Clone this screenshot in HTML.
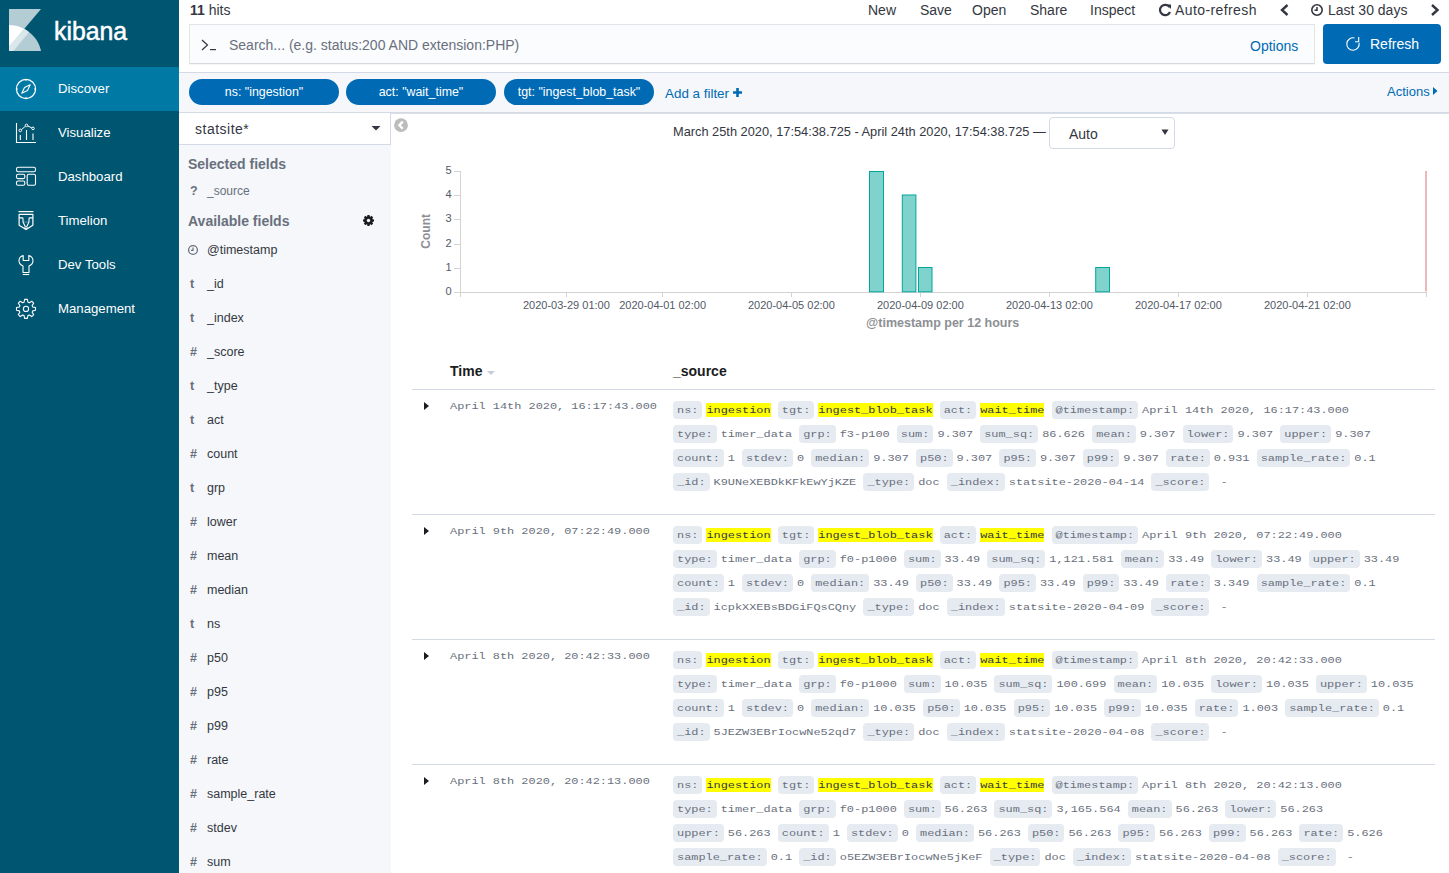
<!DOCTYPE html><html><head><meta charset="utf-8"><style>
*{box-sizing:border-box;margin:0;padding:0}
html,body{width:1449px;height:873px;overflow:hidden;background:#fff}
body{position:relative;font-family:"Liberation Sans",sans-serif;color:#343741}
.a{position:absolute;white-space:pre;line-height:1}
#nav{position:absolute;left:0;top:0;width:179px;height:873px;background:#005571}
.ni{position:absolute;left:0;width:179px;height:44px}
.ni.act{background:#0079a5}
.ni span{position:absolute;left:58px;top:15px;font-size:13.2px;color:#fff;line-height:1}
.ni svg{position:absolute;left:0;top:0}
.tn{position:absolute;top:3px;font-size:14px;line-height:1;white-space:pre;color:#343741}
.pill{position:absolute;top:79px;height:26px;width:150px;border-radius:13px;background:#006bb4;color:#fff;font-size:12.4px;text-align:center;line-height:26px;white-space:pre}
.fl{position:absolute;left:188px;height:14px;width:190px;font-size:12.5px;line-height:1;color:#343741;white-space:pre}
.fl b{position:absolute;left:2px;top:0px;font-weight:700;color:#69707d;font-size:12.5px}
.fl i{position:absolute;left:19px;top:0;font-style:normal}
.src{position:absolute;left:673px;font-family:"Liberation Mono",monospace;font-size:11.9px;color:#69707d;line-height:24px;white-space:pre}
.src div{height:24px}
.src dt,.src dd{display:inline}
.src dt{background:#e6ebf2;padding:2px 4px;margin-right:4px;border-radius:4px;color:#69707d}
.src mark{background:#ff0;color:#343741}
.src s,.tm s{text-decoration:none;display:inline-block;transform:translateY(0.6px) scaleY(0.8);transform-origin:0 10px}
.tm{position:absolute;left:450px;font-family:"Liberation Mono",monospace;font-size:11.9px;color:#69707d;line-height:1;white-space:pre}
.sep{position:absolute;left:412px;width:1023px;height:1px;background:#d3dae6}
.exp{position:absolute;left:424px;width:0;height:0;border-top:4px solid transparent;border-bottom:4px solid transparent;border-left:5px solid #1a1c21}
</style></head><body>
<div id="nav">
<svg style="position:absolute;left:0;top:0" width="60" height="60" viewBox="0 0 60 60">
<defs><clipPath id="sq"><rect x="9" y="9" width="32" height="42"/></clipPath>
<clipPath id="arc"><path d="M9,25 C24,25 38,36 41,51 L9,51 Z"/></clipPath></defs>
<g clip-path="url(#sq)">
<polygon points="9,9 41,9 9,47" fill="#b4cdd4"/>
<path d="M9,25 C24,25 38,36 41,51 L9,51 Z" fill="#b4cdd4"/>
<g clip-path="url(#arc)">
<polygon points="0,57.5 41,9 0,9" fill="#fff"/>
<polygon points="0,57.5 41,9 45,13 10,55" fill="#dae7eb"/>
</g>
</g>
</svg>
<div class="a" style="left:54px;top:18px;font-size:26px;color:#fff;-webkit-text-stroke:0.5px #fff;transform:scaleX(0.955);transform-origin:0 0">kibana</div>
<div class="ni act" style="top:67px"><svg width="50" height="44" viewBox="0 0 50 44"><circle cx="26" cy="22" r="9.6" fill="none" stroke="#fff" stroke-width="1.2"/><path d="M26,12.4 V14 M26,30 V31.6 M16.4,22 H18 M34,22 H35.6" stroke="#fff" stroke-width="1"/><path d="M21.8,26.2 L24.5,20.5 L30.2,17.8 L27.5,23.5 Z" fill="none" stroke="#fff" stroke-width="1.1" stroke-linejoin="round"/></svg><span>Discover</span></div>
<div class="ni" style="top:111px"><svg width="50" height="44" viewBox="0 0 50 44"><path d="M16.5,12 V31.5 H36" fill="none" stroke="#fff" stroke-width="1.1"/><circle cx="20.3" cy="19.4" r="1.3" fill="none" stroke="#fff" stroke-width="1"/><circle cx="26.5" cy="14.4" r="1.3" fill="none" stroke="#fff" stroke-width="1"/><circle cx="33" cy="17.4" r="1.3" fill="none" stroke="#fff" stroke-width="1"/><path d="M21.4,18.6 L25.4,15.3 M27.7,15 L31.8,16.8" stroke="#fff" stroke-width="1"/><path d="M20.3,24 V29 M26.5,19 V29 M33,22.5 V29" stroke="#fff" stroke-width="1.1"/></svg><span>Visualize</span></div>
<div class="ni" style="top:155px"><svg width="50" height="44" viewBox="0 0 50 44"><rect x="16.5" y="12.3" width="19" height="4.5" rx="1.8" fill="none" stroke="#fff" stroke-width="1.1"/><rect x="16.5" y="19.3" width="8.3" height="4.3" rx="1.5" fill="none" stroke="#fff" stroke-width="1.1"/><rect x="16.5" y="26" width="8.3" height="4.3" rx="1.5" fill="none" stroke="#fff" stroke-width="1.1"/><rect x="27.2" y="19.3" width="8.3" height="11" rx="1.5" fill="none" stroke="#fff" stroke-width="1.1"/></svg><span>Dashboard</span></div>
<div class="ni" style="top:199px"><svg width="50" height="44" viewBox="0 0 50 44"><path d="M18.5,12.6 H33.5" stroke="#fff" stroke-width="1.2"/><path d="M19.1,15.3 H32.9 V26.2 L26,30.6 L19.1,26.2 Z" fill="none" stroke="#fff" stroke-width="1.2" stroke-linejoin="round"/><path d="M19.1,18.9 H22.2 Q23,18.9 23,19.8 V23 L25.2,27.6 M32.9,18.9 H29.8 Q29,18.9 29,19.8 V23 L26.8,27.6" fill="none" stroke="#fff" stroke-width="1.1"/><path d="M23,23 H29" stroke="#fff" stroke-width="0.6" opacity="0.6"/><circle cx="26" cy="28.6" r="1.1" fill="none" stroke="#fff" stroke-width="1"/></svg><span>Timelion</span></div>
<div class="ni" style="top:243px"><svg width="50" height="44" viewBox="0 0 50 44"><path d="M23.2,12.5 C20.5,13.3 19,15.5 19,17.8 C19,20 20.5,22 23,23 V29.5 H29 V23 C31.5,22 33,20 33,17.8 C33,15.5 31.5,13.3 28.8,12.5 V17.5 H23.2 Z" fill="none" stroke="#fff" stroke-width="1.1" stroke-linejoin="round"/><path d="M22.8,31.5 H29.2" stroke="#fff" stroke-width="1.1"/></svg><span>Dev Tools</span></div>
<div class="ni" style="top:287px"><svg width="50" height="44" viewBox="0 0 50 44"><path d="M32.72,19.95 L35.50,20.55 L35.50,23.25 L32.72,23.85 L32.13,25.27 L33.68,27.66 L31.76,29.58 L29.37,28.03 L27.95,28.62 L27.35,31.40 L24.65,31.40 L24.05,28.62 L22.63,28.03 L20.24,29.58 L18.32,27.66 L19.87,25.27 L19.28,23.85 L16.50,23.25 L16.50,20.55 L19.28,19.95 L19.87,18.53 L18.32,16.14 L20.24,14.22 L22.63,15.77 L24.05,15.18 L24.65,12.40 L27.35,12.40 L27.95,15.18 L29.37,15.77 L31.76,14.22 L33.68,16.14 L32.13,18.53 Z" fill="none" stroke="#fff" stroke-width="1.1" stroke-linejoin="round"/><circle cx="26" cy="21.9" r="2.6" fill="none" stroke="#fff" stroke-width="1.1"/></svg><span>Management</span></div>
</div>
<div class="tn" style="left:190px"><b>11</b> hits</div>
<div class="tn" style="left:868px">New</div>
<div class="tn" style="left:920px">Save</div>
<div class="tn" style="left:972px">Open</div>
<div class="tn" style="left:1030px">Share</div>
<div class="tn" style="left:1090px">Inspect</div>
<div class="tn" style="left:1175px;letter-spacing:0.4px">Auto-refresh</div>
<div class="tn" style="left:1328px">Last 30 days</div>
<svg style="position:absolute;left:1157px;top:2px" width="16" height="16" viewBox="0 0 16 16"><path d="M12.6,5.2 A5.2,5.2 0 1 0 13,10" fill="none" stroke="#343741" stroke-width="2.2"/><path d="M9.5,2.5 L14,2.5 L14,7 Z" fill="#343741"/></svg>
<svg style="position:absolute;left:1278px;top:2px" width="14" height="16" viewBox="0 0 14 16"><path d="M9.5,3 L4,8 L9.5,13" fill="none" stroke="#343741" stroke-width="2.4"/></svg>
<svg style="position:absolute;left:1428px;top:2px" width="14" height="16" viewBox="0 0 14 16"><path d="M4,3 L9.5,8 L4,13" fill="none" stroke="#343741" stroke-width="2.4"/></svg>
<svg style="position:absolute;left:1309px;top:3px" width="16" height="16" viewBox="0 0 16 16"><circle cx="8" cy="7" r="5.2" fill="none" stroke="#343741" stroke-width="1.6"/><path d="M8,4 V7.3 H5.5" fill="none" stroke="#343741" stroke-width="1.5"/></svg>
<div style="position:absolute;left:189px;top:24px;width:1126px;height:40px;background:#fbfcfd;border:1px solid #e2e4e8;border-bottom-color:#d6d8dc;box-shadow:0 1px 1px rgba(0,0,0,0.04)"></div>
<svg style="position:absolute;left:198px;top:36px" width="22" height="18" viewBox="0 0 22 18"><path d="M4,4 L9.5,9 L4,14" fill="none" stroke="#343741" stroke-width="1.2"/><path d="M12,13.6 H18" stroke="#343741" stroke-width="1.2"/></svg>
<div class="a" style="left:229px;top:38px;font-size:14px;color:#69707d">Search... (e.g. status:200 AND extension:PHP)</div>
<div class="a" style="left:1250px;top:39px;font-size:14px;color:#006bb4">Options</div>
<div style="position:absolute;left:1323px;top:24px;width:118px;height:40px;background:#006bb4;border-radius:4px"></div>
<svg style="position:absolute;left:1344px;top:35px" width="18" height="18" viewBox="0 0 18 18"><path d="M10.5,3 A6.2,6.2 0 1 0 15.1,7.9" fill="none" stroke="#fff" stroke-width="1.1"/><path d="M14.7,2 V6.8 H11" fill="none" stroke="#fff" stroke-width="1.1"/></svg>
<div class="a" style="left:1370px;top:37px;font-size:14px;color:#fff">Refresh</div>
<div style="position:absolute;left:179px;top:72px;width:1270px;height:41px;background:#f5f7fa;border-top:1px solid #d3dae6;border-bottom:1px solid #d3dae6;box-shadow:0 1px 0 rgba(211,218,230,0.85)"></div>
<div class="pill" style="left:189px">ns: "ingestion"</div>
<div class="pill" style="left:346px">act: "wait_time"</div>
<div class="pill" style="left:504px">tgt: "ingest_blob_task"</div>
<div class="a" style="left:665px;top:87px;font-size:13.4px;color:#006bb4">Add a filter</div>
<svg style="position:absolute;left:732px;top:87px" width="12" height="12" viewBox="0 0 12 12"><path d="M5.5,1 V10 M1,5.5 H10" stroke="#006bb4" stroke-width="2.6"/></svg>
<div class="a" style="left:1387px;top:85px;font-size:13px;color:#006bb4">Actions</div>
<svg style="position:absolute;left:1431px;top:85px" width="8" height="12" viewBox="0 0 8 12"><path d="M2,2 L6.5,6 L2,10 Z" fill="#006bb4"/></svg>
<div style="position:absolute;left:179px;top:113px;width:212px;height:760px;background:#f5f7fa"></div>
<div style="position:absolute;left:179px;top:113px;width:212px;height:32px;background:#fff;border-right:1px solid #d3dae6;border-bottom:1px solid #d3dae6"></div>
<div class="a" style="left:195px;top:122px;font-size:14px;letter-spacing:0.5px">statsite*</div>
<svg style="position:absolute;left:370px;top:124px" width="12" height="8" viewBox="0 0 12 8"><path d="M1.5,2 L10.5,2 L6,6.5 Z" fill="#343741"/></svg>
<div class="a" style="left:188px;top:157px;font-size:14px;font-weight:700;color:#69707d">Selected fields</div>
<div class="fl" style="top:185px"><b>?</b><i style="color:#69707d;font-size:12px">_source</i></div>
<div class="a" style="left:188px;top:214px;font-size:14px;font-weight:700;color:#69707d">Available fields</div>
<svg style="position:absolute;left:362px;top:214px" width="13" height="13" viewBox="0 0 13 13"><path d="M10.73,5.27 L11.99,5.41 L11.99,7.59 L10.73,7.73 L10.36,8.62 L11.16,9.61 L9.61,11.16 L8.62,10.36 L7.73,10.73 L7.59,11.99 L5.41,11.99 L5.27,10.73 L4.38,10.36 L3.39,11.16 L1.84,9.61 L2.64,8.62 L2.27,7.73 L1.01,7.59 L1.01,5.41 L2.27,5.27 L2.64,4.38 L1.84,3.39 L3.39,1.84 L4.38,2.64 L5.27,2.27 L5.41,1.01 L7.59,1.01 L7.73,2.27 L8.62,2.64 L9.61,1.84 L11.16,3.39 L10.36,4.38 Z" fill="#1a1c21"/><circle cx="6.5" cy="6.5" r="1.7" fill="#f5f7fa"/></svg>
<svg style="position:absolute;left:187px;top:244px" width="12" height="12" viewBox="0 0 12 12"><circle cx="6" cy="6" r="4.4" fill="none" stroke="#69707d" stroke-width="1.3"/><path d="M6,3.5 V6.4 H4" fill="none" stroke="#69707d" stroke-width="1.2"/></svg>
<div class="fl" style="top:244px"><i>@timestamp</i></div>
<div class="fl" style="top:278px"><b>t</b><i>_id</i></div>
<div class="fl" style="top:312px"><b>t</b><i>_index</i></div>
<div class="fl" style="top:346px"><b>#</b><i>_score</i></div>
<div class="fl" style="top:380px"><b>t</b><i>_type</i></div>
<div class="fl" style="top:414px"><b>t</b><i>act</i></div>
<div class="fl" style="top:448px"><b>#</b><i>count</i></div>
<div class="fl" style="top:482px"><b>t</b><i>grp</i></div>
<div class="fl" style="top:516px"><b>#</b><i>lower</i></div>
<div class="fl" style="top:550px"><b>#</b><i>mean</i></div>
<div class="fl" style="top:584px"><b>#</b><i>median</i></div>
<div class="fl" style="top:618px"><b>t</b><i>ns</i></div>
<div class="fl" style="top:652px"><b>#</b><i>p50</i></div>
<div class="fl" style="top:686px"><b>#</b><i>p95</i></div>
<div class="fl" style="top:720px"><b>#</b><i>p99</i></div>
<div class="fl" style="top:754px"><b>#</b><i>rate</i></div>
<div class="fl" style="top:788px"><b>#</b><i>sample_rate</i></div>
<div class="fl" style="top:822px"><b>#</b><i>stdev</i></div>
<div class="fl" style="top:856px"><b>#</b><i>sum</i></div>
<svg style="position:absolute;left:393px;top:117px" width="16" height="16" viewBox="0 0 16 16"><circle cx="8" cy="8.2" r="6.9" fill="#bcbcbc"/><path d="M9.8,4.6 L6.3,8.2 L9.8,11.8" fill="none" stroke="#fff" stroke-width="2.3"/></svg>
<div class="a" style="left:673px;top:126px;font-size:12.8px">March 25th 2020, 17:54:38.725 - April 24th 2020, 17:54:38.725 —</div>
<div style="position:absolute;left:1049px;top:117px;width:126px;height:32px;background:#fff;border:1px solid #d3dae6;border-radius:4px"></div>
<div class="a" style="left:1069px;top:127px;font-size:14px">Auto</div>
<svg style="position:absolute;left:1160px;top:127px" width="10" height="10" viewBox="0 0 10 10"><path d="M1.5,2.5 L8.5,2.5 L5,8 Z" fill="#343741"/></svg>
<svg style="position:absolute;left:0;top:0" width="1449" height="873" viewBox="0 0 1449 873"><g stroke="#d3d3d3" stroke-width="1" shape-rendering="crispEdges"><line x1="460.5" y1="171" x2="460.5" y2="297"/><line x1="460" y1="292.5" x2="1426" y2="292.5"/><line x1="454" y1="292.5" x2="460" y2="292.5"/><line x1="454" y1="268.3" x2="460" y2="268.3"/><line x1="454" y1="244.1" x2="460" y2="244.1"/><line x1="454" y1="219.9" x2="460" y2="219.9"/><line x1="454" y1="195.7" x2="460" y2="195.7"/><line x1="454" y1="171.5" x2="460" y2="171.5"/><line x1="566.4" y1="292" x2="566.4" y2="297"/><line x1="662.6" y1="292" x2="662.6" y2="297"/><line x1="791.4" y1="292" x2="791.4" y2="297"/><line x1="920.4" y1="292" x2="920.4" y2="297"/><line x1="1049.4" y1="292" x2="1049.4" y2="297"/><line x1="1178.4" y1="292" x2="1178.4" y2="297"/><line x1="1307.4" y1="292" x2="1307.4" y2="297"/><line x1="1426.4" y1="292" x2="1426.4" y2="297"/></g><rect x="869.5" y="171.5" width="14" height="120.30000000000001" fill="#80d2cc" stroke="#00a69b" stroke-width="1"/><rect x="902.3" y="195.0" width="13.600000000000023" height="96.80000000000001" fill="#80d2cc" stroke="#00a69b" stroke-width="1"/><rect x="918.5" y="267.5" width="13.5" height="24.30000000000001" fill="#80d2cc" stroke="#00a69b" stroke-width="1"/><rect x="1095.7" y="267.5" width="13.799999999999955" height="24.30000000000001" fill="#80d2cc" stroke="#00a69b" stroke-width="1"/><line x1="1426" y1="171" x2="1426" y2="291.5" stroke="#e7a0a3" stroke-width="1.5"/><g font-family="Liberation Sans" font-size="11" fill="#535966"><text x="451.5" y="295.0" text-anchor="end">0</text><text x="451.5" y="270.8" text-anchor="end">1</text><text x="451.5" y="246.6" text-anchor="end">2</text><text x="451.5" y="222.4" text-anchor="end">3</text><text x="451.5" y="198.2" text-anchor="end">4</text><text x="451.5" y="174.0" text-anchor="end">5</text><text x="566.4" y="309" text-anchor="middle">2020-03-29 01:00</text><text x="662.6" y="309" text-anchor="middle">2020-04-01 02:00</text><text x="791.4" y="309" text-anchor="middle">2020-04-05 02:00</text><text x="920.4" y="309" text-anchor="middle">2020-04-09 02:00</text><text x="1049.4" y="309" text-anchor="middle">2020-04-13 02:00</text><text x="1178.4" y="309" text-anchor="middle">2020-04-17 02:00</text><text x="1307.4" y="309" text-anchor="middle">2020-04-21 02:00</text></g><text x="942.7" y="327" text-anchor="middle" font-family="Liberation Sans" font-size="12.5" font-weight="700" fill="#8d8f94">@timestamp per 12 hours</text><text transform="translate(430,231.3) rotate(-90)" text-anchor="middle" font-family="Liberation Sans" font-size="12" font-weight="700" fill="#8d8f94">Count</text></svg>
<div class="a" style="left:450px;top:364px;font-size:14px;font-weight:700;color:#1a1c21">Time</div>
<svg style="position:absolute;left:486px;top:369px" width="10" height="8" viewBox="0 0 10 8"><path d="M1,2 L9,2 L5,6 Z" fill="#c5ccd7"/></svg>
<div class="a" style="left:673px;top:364px;font-size:14px;font-weight:700;color:#1a1c21">_source</div>
<div class="sep" style="top:389px;height:1px"></div>
<div class="exp" style="top:402px"></div>
<div class="tm" style="top:400px"><s>April 14th 2020, 16:17:43.000</s></div>
<div class="src" style="top:398px"><div><dt><s>ns:</s></dt><dd><mark><s>ingestion</s></mark></dd> <dt><s>tgt:</s></dt><dd><mark><s>ingest_blob_task</s></mark></dd> <dt><s>act:</s></dt><dd><mark><s>wait_time</s></mark></dd> <dt><s>@timestamp:</s></dt><dd><s>April 14th 2020, 16:17:43.000</s></dd></div><div><dt><s>type:</s></dt><dd><s>timer_data</s></dd> <dt><s>grp:</s></dt><dd><s>f3-p100</s></dd> <dt><s>sum:</s></dt><dd><s>9.307</s></dd> <dt><s>sum_sq:</s></dt><dd><s>86.626</s></dd> <dt><s>mean:</s></dt><dd><s>9.307</s></dd> <dt><s>lower:</s></dt><dd><s>9.307</s></dd> <dt><s>upper:</s></dt><dd><s>9.307</s></dd></div><div><dt><s>count:</s></dt><dd><s>1</s></dd> <dt><s>stdev:</s></dt><dd><s>0</s></dd> <dt><s>median:</s></dt><dd><s>9.307</s></dd> <dt><s>p50:</s></dt><dd><s>9.307</s></dd> <dt><s>p95:</s></dt><dd><s>9.307</s></dd> <dt><s>p99:</s></dt><dd><s>9.307</s></dd> <dt><s>rate:</s></dt><dd><s>0.931</s></dd> <dt><s>sample_rate:</s></dt><dd><s>0.1</s></dd></div><div><dt><s>_id:</s></dt><dd><s>K9UNeXEBDkKFkEwYjKZE</s></dd> <dt><s>_type:</s></dt><dd><s>doc</s></dd> <dt><s>_index:</s></dt><dd><s>statsite-2020-04-14</s></dd> <dt><s>_score:</s></dt><dd><s> -</s></dd></div></div>
<div class="sep" style="top:514px"></div>
<div class="exp" style="top:527px"></div>
<div class="tm" style="top:525px"><s>April 9th 2020, 07:22:49.000</s></div>
<div class="src" style="top:523px"><div><dt><s>ns:</s></dt><dd><mark><s>ingestion</s></mark></dd> <dt><s>tgt:</s></dt><dd><mark><s>ingest_blob_task</s></mark></dd> <dt><s>act:</s></dt><dd><mark><s>wait_time</s></mark></dd> <dt><s>@timestamp:</s></dt><dd><s>April 9th 2020, 07:22:49.000</s></dd></div><div><dt><s>type:</s></dt><dd><s>timer_data</s></dd> <dt><s>grp:</s></dt><dd><s>f0-p1000</s></dd> <dt><s>sum:</s></dt><dd><s>33.49</s></dd> <dt><s>sum_sq:</s></dt><dd><s>1,121.581</s></dd> <dt><s>mean:</s></dt><dd><s>33.49</s></dd> <dt><s>lower:</s></dt><dd><s>33.49</s></dd> <dt><s>upper:</s></dt><dd><s>33.49</s></dd></div><div><dt><s>count:</s></dt><dd><s>1</s></dd> <dt><s>stdev:</s></dt><dd><s>0</s></dd> <dt><s>median:</s></dt><dd><s>33.49</s></dd> <dt><s>p50:</s></dt><dd><s>33.49</s></dd> <dt><s>p95:</s></dt><dd><s>33.49</s></dd> <dt><s>p99:</s></dt><dd><s>33.49</s></dd> <dt><s>rate:</s></dt><dd><s>3.349</s></dd> <dt><s>sample_rate:</s></dt><dd><s>0.1</s></dd></div><div><dt><s>_id:</s></dt><dd><s>icpkXXEBsBDGiFQsCQny</s></dd> <dt><s>_type:</s></dt><dd><s>doc</s></dd> <dt><s>_index:</s></dt><dd><s>statsite-2020-04-09</s></dd> <dt><s>_score:</s></dt><dd><s> -</s></dd></div></div>
<div class="sep" style="top:639px"></div>
<div class="exp" style="top:652px"></div>
<div class="tm" style="top:650px"><s>April 8th 2020, 20:42:33.000</s></div>
<div class="src" style="top:648px"><div><dt><s>ns:</s></dt><dd><mark><s>ingestion</s></mark></dd> <dt><s>tgt:</s></dt><dd><mark><s>ingest_blob_task</s></mark></dd> <dt><s>act:</s></dt><dd><mark><s>wait_time</s></mark></dd> <dt><s>@timestamp:</s></dt><dd><s>April 8th 2020, 20:42:33.000</s></dd></div><div><dt><s>type:</s></dt><dd><s>timer_data</s></dd> <dt><s>grp:</s></dt><dd><s>f0-p1000</s></dd> <dt><s>sum:</s></dt><dd><s>10.035</s></dd> <dt><s>sum_sq:</s></dt><dd><s>100.699</s></dd> <dt><s>mean:</s></dt><dd><s>10.035</s></dd> <dt><s>lower:</s></dt><dd><s>10.035</s></dd> <dt><s>upper:</s></dt><dd><s>10.035</s></dd></div><div><dt><s>count:</s></dt><dd><s>1</s></dd> <dt><s>stdev:</s></dt><dd><s>0</s></dd> <dt><s>median:</s></dt><dd><s>10.035</s></dd> <dt><s>p50:</s></dt><dd><s>10.035</s></dd> <dt><s>p95:</s></dt><dd><s>10.035</s></dd> <dt><s>p99:</s></dt><dd><s>10.035</s></dd> <dt><s>rate:</s></dt><dd><s>1.003</s></dd> <dt><s>sample_rate:</s></dt><dd><s>0.1</s></dd></div><div><dt><s>_id:</s></dt><dd><s>5JEZW3EBrIocwNe52qd7</s></dd> <dt><s>_type:</s></dt><dd><s>doc</s></dd> <dt><s>_index:</s></dt><dd><s>statsite-2020-04-08</s></dd> <dt><s>_score:</s></dt><dd><s> -</s></dd></div></div>
<div class="sep" style="top:764px"></div>
<div class="exp" style="top:777px"></div>
<div class="tm" style="top:775px"><s>April 8th 2020, 20:42:13.000</s></div>
<div class="src" style="top:773px"><div><dt><s>ns:</s></dt><dd><mark><s>ingestion</s></mark></dd> <dt><s>tgt:</s></dt><dd><mark><s>ingest_blob_task</s></mark></dd> <dt><s>act:</s></dt><dd><mark><s>wait_time</s></mark></dd> <dt><s>@timestamp:</s></dt><dd><s>April 8th 2020, 20:42:13.000</s></dd></div><div><dt><s>type:</s></dt><dd><s>timer_data</s></dd> <dt><s>grp:</s></dt><dd><s>f0-p1000</s></dd> <dt><s>sum:</s></dt><dd><s>56.263</s></dd> <dt><s>sum_sq:</s></dt><dd><s>3,165.564</s></dd> <dt><s>mean:</s></dt><dd><s>56.263</s></dd> <dt><s>lower:</s></dt><dd><s>56.263</s></dd></div><div><dt><s>upper:</s></dt><dd><s>56.263</s></dd> <dt><s>count:</s></dt><dd><s>1</s></dd> <dt><s>stdev:</s></dt><dd><s>0</s></dd> <dt><s>median:</s></dt><dd><s>56.263</s></dd> <dt><s>p50:</s></dt><dd><s>56.263</s></dd> <dt><s>p95:</s></dt><dd><s>56.263</s></dd> <dt><s>p99:</s></dt><dd><s>56.263</s></dd> <dt><s>rate:</s></dt><dd><s>5.626</s></dd></div><div><dt><s>sample_rate:</s></dt><dd><s>0.1</s></dd> <dt><s>_id:</s></dt><dd><s>o5EZW3EBrIocwNe5jKeF</s></dd> <dt><s>_type:</s></dt><dd><s>doc</s></dd> <dt><s>_index:</s></dt><dd><s>statsite-2020-04-08</s></dd> <dt><s>_score:</s></dt><dd><s> -</s></dd></div></div>
</body></html>
